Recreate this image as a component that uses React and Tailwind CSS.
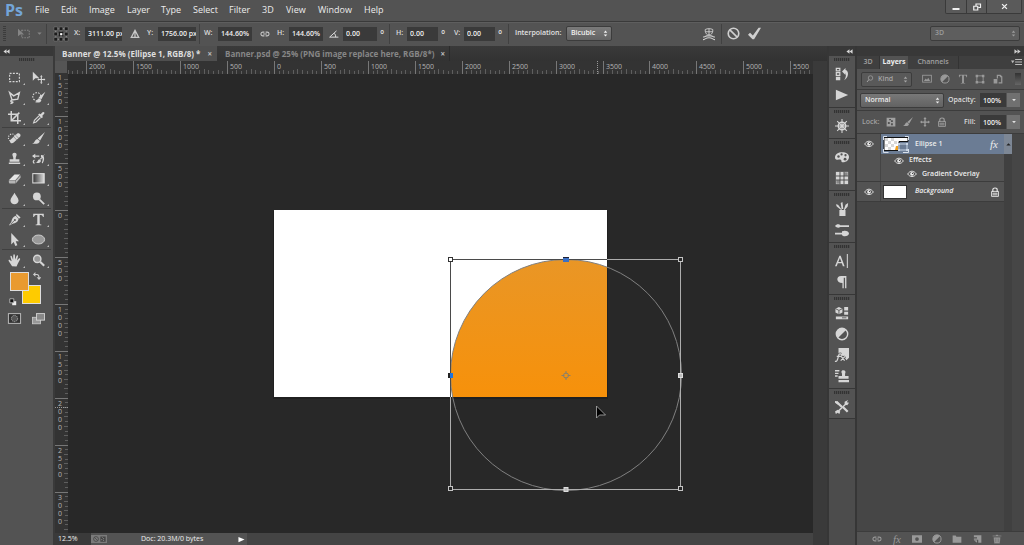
import { useState } from 'react';

const MENUS = [
  { name: 'File', width: 'w-[26px]' },
  { name: 'Edit', width: 'w-[28px]' },
  { name: 'Image', width: 'w-[38px]' },
  { name: 'Layer', width: 'w-[34px]' },
  { name: 'Type', width: 'w-[32px]' },
  { name: 'Select', width: 'w-[36px]' },
  { name: 'Filter', width: 'w-[33px]' },
  { name: '3D', width: 'w-[24px]' },
  { name: 'View', width: 'w-[32px]' },
  { name: 'Window', width: 'w-[46px]' },
  { name: 'Help', width: 'w-[26px]' },
];

const line = { fill: 'none', stroke: 'currentColor', strokeWidth: 1.4 };

// All drawn in a 16x16 box
const ICONS = {
  marquee: <rect x="2" y="3" width="12" height="10" {...line} strokeDasharray="2.4 1.6" />,
  move: (
    <>
      <path d="M1 1v11l3-3h5z" fill="currentColor" />
      <path d="M11.5 6.5v8M7.5 10.5h8" {...line} />
      <path d="M11.5 5l1.5 2h-3zM11.5 16l1.5-2h-3zM16.5 10.5l-2-1.5v3zM6.5 10.5l2-1.5v3z" fill="currentColor" />
    </>
  ),
  lasso: <path d="M2 2l5 4 7-4-2 8-7 1zM5 11c-2 0-2 3 0 2.5S6 15 3 15.5" {...line} strokeWidth="1.7" />,
  quickSelect: (
    <>
      <circle cx="6" cy="7" r="5" {...line} strokeDasharray="2 1.5" />
      <path d="M16.5 1L11.5 10 8 8zM9 9l2.500 2c0 3-4 4-8 2.500 3 0 2.500-4 5.500-4.500z" fill="currentColor" />
    </>
  ),
  crop: <path d="M4 0v12h12M0 4h12v12M5 11l9-9" {...line} strokeWidth="1.8" />,
  eyedropper: (
    <>
      <path d="M9 3l1.5 1L13 1.5c1.5-1 3 .5 2 2L12.5 6l1 1.5L12 9 7.5 4.5z" fill="currentColor" />
      <path d="M8.5 6L3 11.5 2 14.5 5 13.5 10.5 8" {...line} />
    </>
  ),
  heal: (
    <>
      <circle cx="5" cy="7" r="4.5" {...line} strokeDasharray="1.5 1.5" />
      <path d="M11 2c3-2 6 2 3.5 4L7 13c-3 2.5-6-1-4-3.5z" fill="currentColor" />
      <path d="M7 6l4 4M9.5 4l3.5 3.5" stroke="#888" />
    </>
  ),
  brush: <path d="M16 0L10 10.5 7 8zM6.5 8.500l3 2.500c0 3.5-5 4-9.500 3 3.5 0 3-4.500 6.500-5.500z" fill="currentColor" />,
  stamp: <path d="M8 1c2 0 3 1.5 2.5 3L9.5 7v2H14v3H2V9h4.500V7l-1-3C5 2.5 6 1 8 1zM1 13h14v1.800H1z" fill="currentColor" />,
  historyBrush: (
    <>
      <path d="M2 5h7M3 14c-2-1-2-3 0-4" {...line} />
      <path d="M0 5l4-3v6zM16 2l-5 7.5-1.5-1zM9 9l2 1.5c0 3-3 3.5-7 3 3 0 3-4 5-4.500zM11 4c3-2 6 4 2 10l-1-1c2-4 1-7-1-7z" fill="currentColor" />
    </>
  ),
  eraser: (
    <>
      <path d="M8 3h7l-6 7H1z" fill="#e6e6e6" />
      <path d="M1 10.5h8V14H2c-1 0-1-2-1-3.500zM9.5 10.5L15.5 4v3L9.5 14z" fill="#b5b5b5" />
    </>
  ),
  gradient: (
    <>
      <defs>
        <linearGradient id="grey-ramp">
          <stop offset="0" stopColor="#333" />
          <stop offset="1" stopColor="#ddd" />
        </linearGradient>
      </defs>
      <rect x="1" y="2" width="14" height="11.5" fill="url(#grey-ramp)" stroke="#ddd" strokeWidth="1.3" />
    </>
  ),
  blur: <path d="M8 1c1 3 5 6 5 9.5 0 6-10 6-10 0C3 7 7 4 8 1z" fill="currentColor" />,
  dodge: (
    <>
      <circle cx="6" cy="5.5" r="4.8" fill="currentColor" />
      <path d="M9 9l6 6" stroke="currentColor" strokeWidth="2.2" />
    </>
  ),
  pen: (
    <>
      <path d="M10.5 1l5 4.5-2 1.5-3.5-4zM9.5 3.5L13 7.5c-1 4-3 5-8 6L2 15.5l-.5-1L4 11c1-4 2-6 5.5-7.5z" fill="currentColor" />
      <path d="M3 14l5-5" stroke="#535353" />
      <circle cx="8.5" cy="8.5" r="1.2" fill="#535353" />
    </>
  ),
  type: <path d="M1.5 1h13v4h-1c-.5-2-1-2.5-4-2.5V13c0 1 .5 1.3 2 1.3V15h-7v-.7c1.5 0 2-.3 2-1.3V2.5c-3 0-3.5.5-4 2.5h-1z" fill="currentColor" />,
  pathSelect: <path d="M4 0v14l3-3 2 5 2.5-1-2-5h4z" fill="currentColor" />,
  ellipse: <ellipse cx="8" cy="8" rx="7.5" ry="5.5" fill="#999" stroke="#d0d0d0" strokeWidth="1.2" />,
  hand: <path d="M5 15L1 9c-1-1.5.5-2.5 1.5-1.3L4.5 9 3 3.5C2.7 2 4.3 1.6 4.8 3L6.3 7 6.5 1.5c0-1.5 1.9-1.5 2 0l.3 5.3L10.5 2.5c.5-1.4 2.2-.9 1.8.5L11 8l2.3-2.5c1-1 2.2 0 1.5 1.2L12 12l-1.5 3.5z" fill="currentColor" />,
  zoom: (
    <>
      <circle cx="6.5" cy="6" r="4.5" fill="#999" stroke="currentColor" strokeWidth="1.7" />
      <path d="M10 9.5l5 5" stroke="currentColor" strokeWidth="2.6" />
    </>
  ),
  mask: (
    <>
      <rect x="0.5" y="2" width="15" height="12" fill="#333" stroke="#bbb" strokeWidth="1.2" />
      <circle cx="8" cy="8" r="3.8" fill="#555" stroke="#bbb" strokeDasharray="1.5 1" />
    </>
  ),
  screens: (
    <>
      <rect x="0.5" y="6.5" width="10" height="8" fill="#999" stroke="#ccc" />
      <rect x="5.5" y="2" width="10" height="8" fill="#888" stroke="#ddd" />
    </>
  ),
  history: (
    <>
      <path d="M1.5 1.5h4v3h-4zM1.5 6.5h4v3h-4z" {...line} />
      <path d="M1 11h5v4H1zM8 5l4-4v2.5c4.5 1 3.5 9-1.5 11.5 2-3 2.5-6.5 1.5-8.5V9z" fill="currentColor" />
    </>
  ),
  play: <path d="M1 2l14 6-14 6z" fill="currentColor" />,
  wheel: (
    <>
      <circle cx="8" cy="8" r="4.2" {...line} strokeWidth="1.8" />
      <circle cx="8" cy="8" r="1.7" fill="currentColor" />
      <path d="M8 0v16M0 8h16M2.5 2.5l11 11M13.5 2.5l-11 11" stroke="currentColor" strokeWidth="1.2" />
    </>
  ),
  palette: (
    <>
      <path d="M8 2.5c5 0 8 2 8 5.5s-3 6-7 6c-2.5 0-1-2.5-2.5-3S0 12.5 0 8.5 4 2.5 8 2.5z" fill="currentColor" />
      <circle cx="4" cy="7.5" r="1.4" fill="#535353" />
      <circle cx="7.5" cy="5" r="1.3" fill="#535353" />
      <circle cx="12" cy="6" r="1.3" fill="#535353" />
      <circle cx="11.5" cy="10.5" r="1.6" fill="#535353" />
    </>
  ),
  swatches: (
    <>
      <rect x="1" y="1" width="14" height="14" fill="currentColor" />
      <rect x="10.5" y="1.5" width="4" height="4" fill="#888" />
      <rect x="1.5" y="10.5" width="4" height="4" fill="#888" />
      <path d="M5.7 1v14M10.3 1v14M1 5.7h14M1 10.3h14" stroke="#444" />
    </>
  ),
  brushes: <path d="M5 9h7v7H5zM7 9L2 5 1 2.5 3.5 3 8 9zM7.5 8L6.5 1 8.5 0l1 8zM10 9l2-6 3-2-.5 4L11 9z" fill="currentColor" />,
  brushPresets: <path d="M0 3.5c2-3 5-2 6-1h10v2H6c-2 1.5-4 1-6-1zM0 11h8V9.5l2-.5c3-.5 6 1 6 3s-3 3.5-6 3L8 14v-1H0z" fill="currentColor" />,
  character: <path d="M0 14L5 2h1.500L11 14H9L7.800 10.700H3.200L2 14zM3.800 9h3.500L5.600 4.500zM13.500 0h1.200v16h-1.200z" fill="currentColor" />,
  paragraph: <path d="M13 1v14h-1.5V3H10v12H8.5V9C1 9 1 1 7 1z" fill="currentColor" />,
  cube: (
    <>
      <path d="M4.5 1L8.5 3v4.5l-4 2-4-2V3z" fill="currentColor" />
      <path d="M.5 3l4 2 4-2M4.5 5v4.5" stroke="#535353" fill="none" />
      <path d="M10.5 1H15v4h-4.500zM10.5 6.5H15V10h-4.500zM1 12h14v3H1z" fill="currentColor" />
      <path d="M8 13.5h5" stroke="#535353" />
    </>
  ),
  adjustments: (
    <>
      <circle cx="8" cy="8" r="6.5" fill="none" stroke="currentColor" strokeWidth="1.6" />
      <path d="M12.6 3.4L3.4 12.6A6.5 6.5 0 0 1 3.4 3.4 6.5 6.5 0 0 1 12.6 3.4z" fill="currentColor" />
    </>
  ),
  styles: (
    <>
      <path d="M4 0h12v11l-3 3-3-5H4z" fill="currentColor" />
      <path d="M0 15c2 1 3-1 4-6 .5-2 1.5-3 3-2M2 9.5h5M7 9.5l4 5M11.5 9.5l-5 5" {...line} stroke="#535353" strokeWidth="3" />
      <path d="M0 15c2 1 3-1 4-6 .5-2 1.5-3 3-2M2 9.5h5M7 9.5l4 5M11.5 9.5l-5 5" {...line} />
    </>
  ),
  cloneSource: (
    <>
      <path d="M0 2h5M0 5h4M0 8h3" stroke="currentColor" strokeWidth="1.5" />
      <path d="M9.5 1.5c2.5 0 3 2 2 4V8h4v3H4V8h4V5.5c-1-2-1-4 1.5-4zM4 12.5h12V15H4z" fill="currentColor" />
    </>
  ),
  toolPresets: (
    <>
      <path d="M2 2.5L8 8M9 8l5.5 5.5" stroke="currentColor" strokeWidth="2.6" />
      <path d="M13 4L3.5 13" stroke="currentColor" strokeWidth="1.6" />
      <path d="M0 1l3 .5L5 5 3 5 0 3zM11 2l4-2-1.5 2.5L16 3l-2 3-3-1zM0 13l3-2 3 2-1 3-2-1.5L1 16z" fill="currentColor" />
    </>
  ),
  eye: (
    <>
      <path d="M1 8c4-6 10-6 14 0-4 5.5-10 5.5-14 0z" {...line} />
      <circle cx="8" cy="7.7" r="3" fill="currentColor" />
      <circle cx="8.8" cy="7" r="1" fill="#444" />
    </>
  ),
  lock: (
    <>
      <path d="M4.5 8V4.5c0-4 7-4 7 0V8" {...line} strokeWidth="1.8" />
      <path d="M2.5 7h11v8h-11zM4 10h8M4 12.5h8" {...line} />
    </>
  ),
  link: <path d="M7 11H4.500a3 3 0 0 1 0-6H7M9 5h2.500a3 3 0 0 1 0 6H9M5 8h6" {...line} strokeWidth="1.7" />,
  addMask: <path fillRule="evenodd" d="M0 2h16v12H0zM8 5a3 3 0 1 0 0 6 3 3 0 0 0 0-6z" fill="currentColor" />,
  folder: <path d="M1 2.5h5l1 2h8V14H1z" fill="currentColor" />,
  newLayer: <path d="M3 2h12v12h-5V9H3V7h5V5H3zM3 10h5v4z" fill="currentColor" />,
  trash: <path d="M6 1h4v1.5h5V4H1V2.5h5zM2.5 5h11l-1 10h-9zM5.5 7v6M8 7v6M10.5 7v6" fill="currentColor" stroke="#535353" strokeWidth="0.6" />,
  image: (
    <>
      <rect x="1" y="2" width="14" height="11" {...line} />
      <path d="M3 11l3-4 2 2 2-3 3 5z" fill="currentColor" />
    </>
  ),
  vector: (
    <>
      <rect x="3" y="3" width="10" height="10" {...line} />
      <path d="M1 1h4v4H1zM11 1h4v4h-4zM1 11h4v4H1zM11 11h4v4h-4z" fill="currentColor" />
    </>
  ),
  smart: <path d="M6 1h6l3 3v11H9v-2h4V5h-2V3H8v4H6zM1 8h6v7H1z" fill="currentColor" />,
  checker: <path d="M1 1h14v14H1zM5 3v2h3v3h3V5H8V3zM3 8v3h3V8zM8 10v3h3v-3z" fillRule="evenodd" fill="currentColor" />,
  pan: <path d="M8 0l2.5 3H9v4h4V5.5L16 8l-3 2.5V9H9v4h1.5L8 16l-2.5-3H7V9H3v1.5L0 8l3-2.5V7h4V3H5.500z" fill="currentColor" />,
  search: (
    <>
      <circle cx="9" cy="6" r="4.5" {...line} />
      <path d="M6 9l-4 5" stroke="currentColor" strokeWidth="2" />
    </>
  ),
  transform: (
    <>
      <path d="M0 1v10l3-2.5h5z" fill="currentColor" />
      <rect x="5" y="3" width="10" height="10" {...line} strokeDasharray="2 1.5" />
    </>
  ),
  origin: (
    <>
      <path d="M2 2h12v12H2zM8 2v12M2 8h12" stroke="#ccc" strokeDasharray="1 1" fill="none" />
      <path d="M0 0h4v4H0zM6 0h4v4H6zM12 0h4v4h-4zM0 6h4v4H0zM12 6h4v4h-4zM0 12h4v4H0zM6 12h4v4H6zM12 12h4v4h-4z" fill="#1c1c1c" stroke="#999" strokeWidth="0.4" />
      <path d="M5.5 5.5h5v5h-5z" fill="#1c1c1c" />
      <path d="M7 7h2.500v2.500H7z" fill="#fff" />
    </>
  ),
  delta: <path d="M8 2l6 11.5H2zM8 4v9" {...line} strokeWidth="2" />,
  angle: <path d="M15 13H1L12 3M8 7c2 1 3 3 2.5 6" {...line} strokeWidth="1.6" />,
  warp: (
    <>
      <path d="M3 2c3-1.500 7-1.500 10 0 .5 3-1 6-3 7H6C4 8 2.500 5 3 2zM3 5h10M8 1v8" {...line} strokeWidth="1.2" />
      <path d="M0 12c2 0 3-1 5-1.500h6c2 .5 3 1.500 5 1.500M0 15.500c3 0 3-2.500 8-2.500s5 2.500 8 2.500" {...line} />
    </>
  ),
  cancel: (
    <>
      <circle cx="8" cy="8" r="6.5" {...line} strokeWidth="2" />
      <path d="M3.5 3.5l9 9" stroke="currentColor" strokeWidth="2" />
    </>
  ),
  commit: <path d="M0 9.5l2.500-2.5L6 10.5 13 1l3 0L7.5 15H5.500z" fill="currentColor" />,
  restore: <path d="M6 6V2h9v7h-4M1.5 6.5h8V14h-8z" {...line} strokeWidth="2.4" />,
  close: <path d="M2.5 2.5l11 11M13.5 2.5l-11 11" stroke="currentColor" strokeWidth="3" />,
  minimize: <path d="M1 12h14" stroke="currentColor" strokeWidth="4" />,
  updown: <path d="M8 1l4 5H4zM8 15l4-5H4z" fill="currentColor" />,
  caret: <path d="M3 5.5h10L8 11z" fill="currentColor" />,
  left: <path d="M8 3v10L1 8zM15 3v10L8 8z" fill="currentColor" />,
  right: <path d="M1 3v10l7-5zM8 3v10l7-5z" fill="currentColor" />,
  flyout: <path d="M0 5h5l-2.5 4zM6 3h10v1.500H6zM6 6.500h10V8H6zM6 10h10v1.500H6z" fill="currentColor" />,
};

const TOOLS = [
  ['marquee', 'move', 'lasso', 'quickSelect', 'crop', 'eyedropper'],
  ['heal', 'brush', 'stamp', 'historyBrush', 'eraser', 'gradient', 'blur', 'dodge'],
  ['pen', 'type', 'pathSelect', 'ellipse'],
  ['hand', 'zoom'],
];

const DOCK = [
  ['history', 'play'],
  ['wheel'],
  ['palette', 'swatches'],
  ['brushes', 'brushPresets'],
  ['character', 'paragraph'],
  ['cube', 'adjustments', 'styles', 'cloneSource'],
  ['toolPresets'],
];

function Icon({ name, className = 'size-3' }) {
  return (
    <svg viewBox="0 0 16 16" className={`shrink-0 overflow-visible ${className}`} aria-hidden="true">
      {ICONS[name]}
    </svg>
  );
}

function Grip() {
  return (
    <div className="flex h-[7px] items-center justify-center">
      <div className="h-[3px] w-4 bg-[repeating-linear-gradient(90deg,#333_0_1px,#4a4a4a_1px_2px)]" />
    </div>
  );
}

function Divider({ className = '' }) {
  return <div className={`h-5 w-px shrink-0 bg-[#414141] ${className}`} />;
}

function Field({ label, value, className, labelClass, children }) {
  return (
    <label className="flex shrink-0 items-center text-[#dcdcdc]">
      <span className={labelClass}>{children || label}</span>
      <input
        aria-label={label}
        defaultValue={value}
        className={`h-[14px] bg-[#3a3a3a] pl-[3px] text-[#f0f0f0] outline-none ${className}`}
      />
    </label>
  );
}

function Dropdown({ label, options, className = '', children }) {
  return (
    <div className={`relative flex shrink-0 items-center rounded-xs border border-[#3c3c3c] ${className}`}>
      {children}
      <select aria-label={label} className="h-full w-full appearance-none bg-transparent pl-1 outline-none">
        {options.map((o) => (
          <option key={o}>{o}</option>
        ))}
      </select>
      <Icon name="updown" className="pointer-events-none absolute right-[2px] size-[7px]" />
    </div>
  );
}

function MenuBar() {
  return (
    <header className="flex h-[22px] shrink-0 items-start border-b border-[#3a3a3a] bg-[#535353]">
      <div className="w-[35px] pl-[5px] text-base leading-5 font-bold text-[#73a5d8]">Ps</div>
      <nav className="flex h-5 items-center text-[9px] font-medium text-[#ececec]">
        {MENUS.map((m) => (
          <button key={m.name} className={`text-left ${m.width}`}>
            {m.name}
          </button>
        ))}
      </nav>
      <div className="mr-[2px] ml-auto flex h-[14px] divide-x divide-[#3a3a3a] rounded-b-xs border border-t-0 border-[#3a3a3a] bg-[#5a5a5a] text-[#f0f0f0]">
        <button aria-label="Minimize" className="flex w-[21px] items-center justify-center">
          <Icon name="minimize" className="size-2" />
        </button>
        <button aria-label="Restore" className="flex w-5 items-center justify-center">
          <Icon name="restore" className="size-2" />
        </button>
        <button aria-label="Close" className="flex w-[34px] items-center justify-center">
          <Icon name="close" className="size-[7px]" />
        </button>
      </div>
    </header>
  );
}

function OptionsBar() {
  return (
    <div className="flex h-6 shrink-0 items-center border-t border-[#5e5e5e] bg-[#535353] pb-[2px] text-[7px] font-semibold">
      <div className="ml-[3px] h-4 w-[3px] bg-[repeating-linear-gradient(#3c3c3c_0_1px,#535353_1px_2px)]" />
      <Icon name="transform" className="ml-3 size-3 text-[#858585]" />
      <Icon name="caret" className="ml-[6px] size-[7px] text-[#858585]" />
      <Divider className="ml-[3px]" />
      <Icon name="origin" className="ml-[7px] size-[14px]" />
      <div className="ml-[6px] flex items-center">
        <Field label="X:" value="3111.00 px" labelClass="w-[11px]" className="w-[37px]" />
        <button aria-label="Use relative positioning" className="flex w-[25px] justify-center text-[#c8c8c8]">
          <Icon name="delta" className="size-[10px]" />
        </button>
        <Field label="Y:" value="1756.00 px" labelClass="w-[11px]" className="w-[38px]" />
        <Divider className="mr-1 ml-[3px]" />
        <Field label="W:" value="144.60%" labelClass="w-[14px]" className="w-[34px]" />
        <button aria-label="Maintain aspect ratio" className="flex w-[25px] justify-center text-[#c8c8c8]">
          <Icon name="link" className="size-[10px]" />
        </button>
        <Field label="H:" value="144.60%" labelClass="w-3" className="w-[34px]" />
        <div className="w-[6px]" />
        <Field label="Rotate" value="0.00" labelClass="w-[14px]" className="w-[34px]">
          <Icon name="angle" className="size-[10px]" />
        </Field>
        <span className="ml-[3px] w-[9px] text-[10px] leading-3 text-[#d6d6d6]">°</span>
        <Divider className="mr-[6px]" />
        <Field label="H:" value="0.00" labelClass="w-[11px]" className="w-[31px]" />
        <span className="ml-[3px] w-[13px] text-[10px] leading-3 text-[#d6d6d6]">°</span>
        <Field label="V:" value="0.00" labelClass="w-[10px]" className="w-[31px]" />
        <span className="ml-[3px] w-[10px] text-[10px] leading-3 text-[#d6d6d6]">°</span>
        <Divider className="mr-[6px]" />
        <span className="w-[51px] text-[#e2e2e2]">Interpolation:</span>
        <Dropdown
          label="Interpolation"
          options={['Bicubic', 'Bilinear']}
          className="h-[15px] w-[46px] bg-linear-to-b from-[#7a7a7a] to-[#646464] text-[#f2f2f2]"
        />
      </div>
      <div className="ml-[91px] flex items-center text-[#cfcfcf]">
        <button aria-label="Warp">
          <Icon name="warp" />
        </button>
        <Divider className="ml-[6px]" />
        <button aria-label="Cancel transform" className="ml-[5px]">
          <Icon name="cancel" className="size-[13px]" />
        </button>
        <button aria-label="Commit transform" className="ml-2">
          <Icon name="commit" className="size-[13px]" />
        </button>
      </div>
      <Dropdown
        label="Workspace"
        options={['3D', 'Essentials']}
        className="mr-1 ml-auto h-[15px] w-[90px] bg-[#5e5e5e] text-[#9a9a9a]"
      />
    </div>
  );
}

function ToolPanel() {
  return (
    <aside className="flex w-[54px] shrink-0 flex-col border-r border-[#3a3a3a] bg-[#535353] text-[#d6d6d6]">
      <div className="flex h-[10px] items-center bg-[#383838] pl-[3px]">
        <Icon name="left" className="size-[7px]" />
      </div>
      <div className="h-[11px]">
        <Grip />
      </div>
      {TOOLS.map((group) => (
        <div key={group[0]} className="mx-[2px] grid grid-cols-2 border-b border-[#404040] nth-[6]:border-0">
          {group.map((name) => (
            <button key={name} aria-label={name} className="relative flex h-5 items-center justify-center">
              <Icon name={name} className="size-[13px]" />
              <span className="absolute right-[2px] bottom-[2px] border border-[#bbb] border-t-transparent border-l-transparent" />
            </button>
          ))}
        </div>
      ))}
      <div className="relative mt-[2px] ml-[10px] h-8 w-[31px]">
        <button aria-label="Background color" className="absolute right-0 bottom-0 size-[19px] border border-[#ddd] bg-[#fecb00]" />
        <button aria-label="Foreground color" className="absolute top-0 left-0 size-[19px] border border-[#ddd] bg-[#e99a2f]" />
        <svg viewBox="0 0 10 10" className="absolute top-0 right-0 size-2" aria-hidden="true">
          <path d="M1 3h4c2 0 2.5 1 2.5 4" fill="none" stroke="#ccc" strokeWidth="1.3" />
          <path d="M3 0v6L0 3zM4.5 6.5h6L7.5 10z" fill="#ccc" />
        </svg>
        <svg viewBox="0 0 10 10" className="absolute bottom-[-2px] left-[-1px] size-2" aria-hidden="true">
          <path d="M4 4h5v5H4z" fill="#eee" />
          <path d="M1 1h5v5H1z" fill="#111" stroke="#ccc" />
        </svg>
      </div>
      <div className="mx-[2px] mt-1 grid grid-cols-2">
        <button aria-label="Quick mask" className="flex h-5 items-center justify-center">
          <Icon name="mask" className="size-[13px]" />
        </button>
        <button aria-label="Screen mode" className="flex h-5 items-center justify-center">
          <Icon name="screens" className="size-[13px]" />
        </button>
      </div>
    </aside>
  );
}

const STEP = 46.93; // pixels per 500 document units

function HorizontalRuler() {
  const zero = 206;
  const ticks = [];
  for (let i = -44; i <= 116; i++) {
    const x = Math.round(zero + (i * STEP) / 10);
    if (x < 0) continue;
    const top = i % 10 === 0 ? 0 : i % 5 === 0 ? 8 : i % 2 === 0 ? 9 : 10;
    ticks.push(<path key={i} d={`M${x + 0.5} ${top}V13`} stroke={i % 10 ? '#5e5e5e' : '#777'} />);
  }
  const labels = [];
  for (let i = -4; i <= 11; i++) {
    labels.push(
      <text key={i} x={Math.round(zero + i * STEP) + 3} y="8">
        {Math.abs(i * 500)}
      </text>
    );
  }
  return (
    <svg className="h-[13px] min-w-0 flex-1 bg-[#333] fill-[#b4b4b4] text-[7px]">
      {ticks}
      {labels}
      <path d="M529.5 0V13" stroke="#999" strokeDasharray="1 1" />
    </svg>
  );
}

function VerticalRuler() {
  const zero = 136;
  const ticks = [];
  for (let i = -28; i <= 68; i++) {
    const y = Math.round(zero + (i * STEP) / 10);
    const left = i % 10 === 0 ? 0 : i % 2 === 0 ? 9 : 10;
    ticks.push(<path key={i} d={`M${left} ${y + 0.5}H13`} stroke={i % 10 ? '#5e5e5e' : '#777'} />);
  }
  const labels = [];
  for (let i = -3; i <= 6; i++) {
    const top = Math.max(-2, Math.round(zero + i * STEP));
    String(Math.abs(i * 500)).split('').forEach((digit, n) => {
      labels.push(
        <text key={`${i}-${n}`} x="3" y={top + 8 + n * 8}>
          {digit}
        </text>
      );
    });
  }
  return (
    <svg className="h-full w-[13px] shrink-0 bg-[#333] fill-[#b4b4b4] text-[7px]">
      {ticks}
      {labels}
      <path d="M0 333.5H13" stroke="#999" strokeDasharray="1 1" />
    </svg>
  );
}

function Artboard() {
  const corners = [[382, 186], [612, 186], [382, 415], [612, 415]];
  return (
    <svg className="h-full min-w-0 flex-1 bg-[#282828]" role="img" aria-label="Banner">
      <defs>
        <linearGradient id="overlay" x1="0" y1="0" x2="0" y2="1">
          <stop offset="0" stopColor="#e99626" />
          <stop offset="0.6" stopColor="#f7910a" />
          <stop offset="1" stopColor="#ff8c00" />
        </linearGradient>
        <clipPath id="page">
          <rect x="206" y="136" width="333" height="187" />
        </clipPath>
      </defs>
      <rect x="205" y="137" width="335" height="188" fill="#202020" />
      <rect x="206" y="136" width="333" height="187" fill="#fff" />
      <g clipPath="url(#page)">
        <circle cx="498" cy="301" r="115.5" fill="url(#overlay)" />
      </g>
      <circle cx="498" cy="301" r="115.5" fill="none" stroke="#808080" />
      <path d="M382.5 323V186M382.5 185.5H539" stroke="#4a4a4a" />
      <path d="M382.5 323V415.5H612.5V185.5H539" fill="none" stroke="#adadad" />
      {corners.map(([x, y]) => (
        <rect
          key={`${x}-${y}`}
          x={x - 1.5}
          y={y - 2.5}
          width="4"
          height="4"
          fill={x === 382 && y === 186 ? '#fff' : '#282828'}
          stroke={x === 382 && y === 186 ? '#333' : '#c4c4c4'}
        />
      ))}
      <rect x="495" y="183" width="6" height="5" fill="#3a70c4" />
      <path d="M495 183.5h6" stroke="#223" />
      <rect x="380" y="299" width="5" height="5" fill="#1f74dd" />
      <path d="M380 299h2v5h-2z" fill="#222" />
      <rect x="610.5" y="299.5" width="4" height="4" fill="#bbb" stroke="#ddd" />
      <rect x="496" y="413.5" width="4" height="4" fill="#bbb" stroke="#ddd" />
      <circle cx="498" cy="301.5" r="2.5" fill="none" stroke="#88806a" />
      <path d="M498 297v3M498 303v3M493.5 301.5h3M499.5 301.5h3" stroke="#88806a" />
      <path d="M528.5 332v12l3-3h6z" fill="#000" stroke="#b0b0b0" strokeWidth="0.8" />
    </svg>
  );
}

function Workspace() {
  return (
    <main className="flex min-w-0 flex-1 flex-col bg-[#3a3a3a] pl-px">
      <div className="flex h-[15px] shrink-0 items-center bg-linear-to-b from-[#3a3a3a] to-[#323232] text-[8px]">
        <div className="flex h-full w-[162px] items-center justify-between bg-[#4f4f4f] pr-[5px] pl-[7px] font-bold text-[#dedede]">
          <button className="whitespace-nowrap">Banner @ 12.5% (Ellipse 1, RGB/8) *</button>
          <button aria-label="Close Banner" className="text-[#bbb]">×</button>
        </div>
        <div className="flex h-full w-[233px] items-center justify-between border-r border-[#2b2b2b] pr-1 pl-2 font-bold text-[#868686]">
          <button className="whitespace-nowrap">Banner.psd @ 25% (PNG image replace here, RGB/8*)</button>
          <button aria-label="Close Banner.psd" className="text-[#bbb]">×</button>
        </div>
      </div>
      <div className="flex min-h-0 flex-1 pr-[14px]">
        <div className="flex min-w-0 flex-1 flex-col">
          <div className="flex shrink-0">
            <div className="h-[13px] w-[13px] shrink-0 border-r border-b border-[#333] bg-[#555]" />
            <HorizontalRuler />
          </div>
          <div className="flex min-h-0 flex-1">
            <VerticalRuler />
            <Artboard />
          </div>
        </div>
      </div>
      <footer className="flex h-3 shrink-0 items-center text-[7px] font-medium text-[#eee]">
        <span className="w-9 pl-[3px]">12.5%</span>
        <div className="flex h-full w-[156px] items-center bg-[#535353] pr-[2px]">
          <div className="flex h-2 w-4 items-center justify-center gap-px bg-[#7a7a7a] text-[#444]">
            <Icon name="cancel" className="size-[6px]" />
            <Icon name="checker" className="size-[6px]" />
          </div>
          <span className="ml-[34px]">Doc: 20.3M/0 bytes</span>
          <button aria-label="Status menu" className="ml-auto text-white">
            <Icon name="play" className="size-[7px]" />
          </button>
        </div>
        <div className="mr-[14px] h-full flex-1 bg-[#444]" />
      </footer>
    </main>
  );
}

function Dock() {
  return (
    <aside className="flex w-[30px] shrink-0 flex-col border-x-2 border-[#363636] bg-[#4c4c4c] text-[#d6d6d6]">
      <div className="flex h-[10px] shrink-0 items-center justify-end bg-[#383838] pr-[2px]">
        <Icon name="left" className="size-[7px]" />
      </div>
      {DOCK.map((group) => (
        <div key={group[0]} className="border-b border-[#373737] bg-[#535353] pb-[2px] last:pb-px">
          <Grip />
          {group.map((name) => (
            <button key={name} aria-label={name} className="flex h-[21px] w-full items-center justify-center">
              <Icon name={name} className="size-[14px]" />
            </button>
          ))}
        </div>
      ))}
    </aside>
  );
}

function Percent({ label, labelClass = '' }) {
  return (
    <div className="ml-auto flex items-center">
      <Field label={label} value="100%" labelClass={labelClass} className="w-[26px]" />
      <button aria-label={`${label} slider`} className="ml-px flex h-[14px] w-[13px] items-center justify-center bg-[#707070] text-[#e0e0e0]">
        <Icon name="caret" className="size-[6px]" />
      </button>
    </div>
  );
}

function VisibilityButton({ name, visible, onClick, className = '' }) {
  return (
    <button aria-label={`Toggle ${name}`} onClick={onClick} className={`flex items-center justify-center ${className}`}>
      {visible && <Icon name="eye" className="size-[10px]" />}
    </button>
  );
}

function Fx({ className = '' }) {
  return <span className={`font-['Liberation_Serif',serif] text-[11px] leading-3 font-normal italic ${className}`}>fx</span>;
}

function LayersPanel() {
  const [hidden, setHidden] = useState({});
  const toggle = (name) => setHidden({ ...hidden, [name]: !hidden[name] });

  return (
    <aside className="flex w-[167px] shrink-0 flex-col bg-[#464646] text-[7px] font-semibold text-[#ececec]">
      <div className="flex h-[10px] shrink-0 items-center justify-end bg-[#383838] pr-[3px] text-[#ccc]">
        <Icon name="right" className="size-[7px]" />
      </div>
      <div className="flex h-[13px] shrink-0 items-center bg-[#3f3f3f] text-[#a0a0a0]">
        <button className="h-full w-[23px] border-r border-[#333]">3D</button>
        <button className="h-full w-7 bg-[#535353] font-bold text-[#eee]">Layers</button>
        <button className="h-full w-[51px] border-r border-[#333]">Channels</button>
        <button aria-label="Panel menu" className="mr-[2px] ml-auto text-[#bbb]">
          <Icon name="flyout" className="size-[11px]" />
        </button>
      </div>

      <div className="flex h-[21px] shrink-0 items-center border-b border-[#3c3c3c] bg-[#535353] pr-[3px] pl-1 text-[#999]">
        <Dropdown label="Filter type" options={['Kind', 'Name']} className="h-[15px] w-[51px] bg-[#595959] pl-1 text-[#a5a5a5]">
          <Icon name="search" className="size-2" />
        </Dropdown>
        <div className="ml-[10px] flex flex-1 items-center justify-between">
          {['image', 'adjustments', 'type', 'vector', 'smart'].map((name) => (
            <button key={name} aria-label={`Filter ${name}`}>
              <Icon name={name} className="size-[10px]" />
            </button>
          ))}
          <div className="ml-1 h-3 w-[6px] bg-linear-to-b from-[#333] to-[#666]" />
        </div>
      </div>

      <div className="flex h-[21px] shrink-0 items-center border-b border-[#3c3c3c] bg-[#535353] pr-1 pl-[3px]">
        <Dropdown
          label="Blend mode"
          options={['Normal', 'Multiply', 'Screen']}
          className="h-[15px] w-[84px] bg-linear-to-b from-[#787878] to-[#626262]"
        />
        <Percent label="Opacity:" labelClass="w-8" />
      </div>

      <div className="flex h-[23px] shrink-0 items-center border-b border-[#3c3c3c] bg-[#535353] pr-1 pl-[5px] text-[#a0a0a0]">
        <span className="w-6">Lock:</span>
        <div className="flex gap-[7px]">
          {['checker', 'brush', 'pan', 'lock'].map((name) => (
            <button key={name} aria-label={`Lock ${name}`}>
              <Icon name={name} className="size-[10px]" />
            </button>
          ))}
        </div>
        <Percent label="Fill:" labelClass="w-4" />
      </div>

      <div className="flex min-h-0 flex-1">
        <div className="min-w-0 flex-1">
          <div className="flex h-5 bg-[#535353]">
            <VisibilityButton name="Ellipse 1" visible={!hidden.ellipse} onClick={() => toggle('ellipse')} className="w-6 border-r border-[#444]" />
            <div className="flex flex-1 items-center bg-[#6b7c94] pl-[2px]">
              <svg viewBox="0 0 26 17" className="h-[17px] w-[26px]" aria-hidden="true">
                <path d="M1 1.5h24v4H16v9H1z" fill="#fff" stroke="#111" />
                <path d="M2 2h3v3H2zM8 2h3v3H8zM5 5h3v3H5zM11 5h3v3h-3zM2 8h3v3H2zM8 8h3v3H8zM5 11h3v3H5z" fill="#d8d8d8" />
                <path d="M13 10h2v4h-3z" fill="#f0a020" />
                <path d="M16 8h8v6h-8z" fill="#6b7c94" stroke="#c8d4e4" />
                <path d="M15 7h2v2h-2zM23 7h2v2h-2zM15 13h2v2h-2zM23 13h2v2h-2z" fill="#c8d4e4" />
                <path d="M.5 13v3.500h5M20 16.500h5.500V13M.5 4V.5H4M22 .5h3.500V4" fill="none" stroke="#d8e0ea" />
              </svg>
              <span className="ml-[6px]">Ellipse 1</span>
              <Fx className="mr-[6px] ml-auto" />
            </div>
          </div>
          <div className="flex border-b border-[#3c3c3c] bg-[#535353]">
            <div className="w-6 border-r border-[#444]" />
            <div className="flex-1">
              <div className="flex h-[13px] items-center pl-[13px]">
                <VisibilityButton name="Effects" visible={!hidden.effects} onClick={() => toggle('effects')} className="w-[10px]" />
                <span className="ml-[5px]">Effects</span>
              </div>
              <div className="flex h-[14px] items-center pl-[26px]">
                <VisibilityButton name="Gradient Overlay" visible={!hidden.overlay} onClick={() => toggle('overlay')} className="w-[10px]" />
                <span className="ml-[5px] whitespace-nowrap">Gradient Overlay</span>
              </div>
            </div>
          </div>
          <div className="flex h-5 border-b border-[#3c3c3c] bg-[#535353]">
            <VisibilityButton name="Background" visible={!hidden.background} onClick={() => toggle('background')} className="w-6 border-r border-[#444]" />
            <div className="flex flex-1 items-center pl-[2px]">
              <div className="h-[14px] w-6 border border-[#333] bg-white" />
              <span className="ml-2 italic">Background</span>
              <Icon name="lock" className="mr-[4px] ml-auto size-[10px]" />
            </div>
          </div>
        </div>
        <div className="mr-3 w-2 bg-[#404040]">
          <button aria-label="Scroll up" className="flex h-5 w-full items-center justify-center bg-[#7d8795] text-[#222]">
            <Icon name="caret" className="size-[7px] rotate-180" />
          </button>
        </div>
      </div>

      <div className="flex h-[14px] shrink-0 items-center gap-[10px] border-t border-[#3c3c3c] bg-[#535353] pl-[15px] text-[#999]">
        {['link', 'fx', 'addMask', 'adjustments', 'folder', 'newLayer', 'trash'].map((name) => (
          <button key={name} aria-label={name} className="flex w-[10px] justify-center">
            {name === 'fx' ? <Fx /> : <Icon name={name} className="size-[10px]" />}
          </button>
        ))}
      </div>
    </aside>
  );
}

export default function App() {
  return (
    <div className="flex h-screen flex-col overflow-hidden bg-[#383838] font-['Open_Sans','Noto_Sans',sans-serif]">
      <MenuBar />
      <OptionsBar />
      <div className="flex min-h-0 flex-1">
        <ToolPanel />
        <Workspace />
        <Dock />
        <LayersPanel />
      </div>
    </div>
  );
}
